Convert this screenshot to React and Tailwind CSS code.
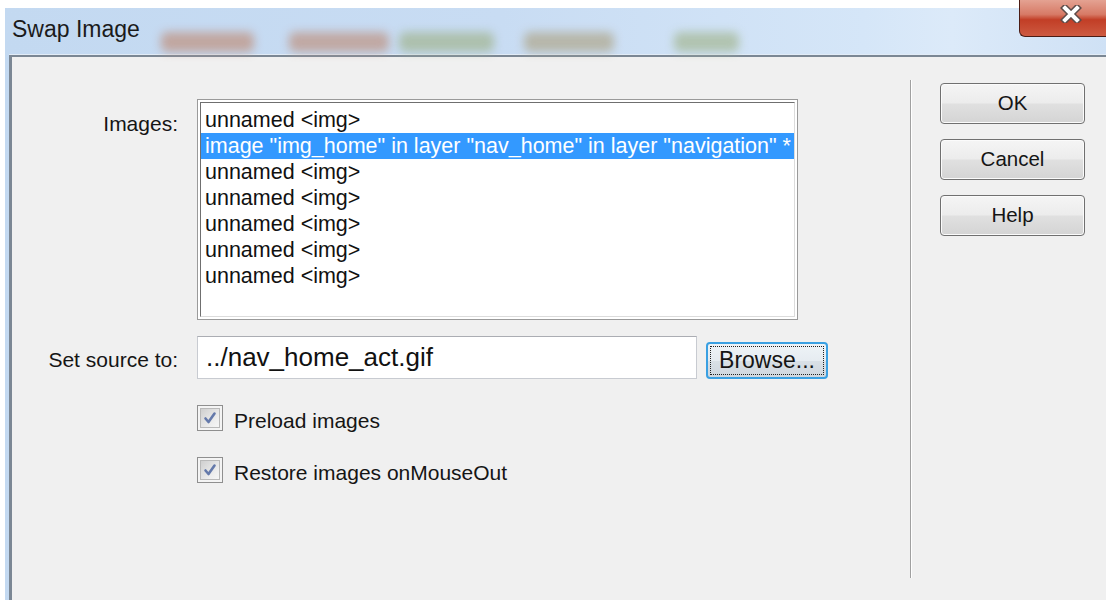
import React from "react";

const images = [
  "unnamed <img>",
  'image "img_home" in layer "nav_home" in layer "navigation" *',
  "unnamed <img>",
  "unnamed <img>",
  "unnamed <img>",
  "unnamed <img>",
  "unnamed <img>",
];

// blurred shapes of the window behind the glass title bar
const ghosts = [
  { w: "w-[93px]", ml: "ml-[21px]", c: "bg-[#c09a8c]" },
  { w: "w-[100px]", ml: "ml-[35px]", c: "bg-[#bf9c90]" },
  { w: "w-[95px]", ml: "ml-[10px]", c: "bg-[#a6b99c]" },
  { w: "w-[90px]", ml: "ml-[30px]", c: "bg-[#b2ad98]" },
  { w: "w-[65px]", ml: "ml-[60px]", c: "bg-[#a9bc9f]" },
];

function CheckBox({ label }) {
  return (
    <div className="flex items-center h-[26px]">
      <span className="w-[26px] h-[26px] border border-[#8f8f8f] bg-[#f4f4f4] p-[2px] flex">
        <span className="flex-1 flex items-center justify-center border border-[#b9b9b9] bg-[linear-gradient(135deg,#cfcfcf,#eeeeee_70%,#f6f6f6)]">
          <svg width="14" height="14" viewBox="0 0 14 14">
            <path
              d="M2.5 7.5 L5.5 11 L11.5 2.5"
              fill="none"
              stroke="#4d66a0"
              strokeWidth="2.6"
              strokeLinecap="round"
              strokeLinejoin="round"
              opacity="0.85"
            />
          </svg>
        </span>
      </span>
      <span className="ml-[11px] pt-[6px] text-[21px] text-[#151515]">{label}</span>
    </div>
  );
}

function DialogButton({ children }) {
  return (
    <button className="w-[145px] h-[41px] rounded-[4px] border border-[#707070] shadow-[inset_0_0_0_1px_#fbfbfb] bg-[linear-gradient(#f5f5f5_0%,#ececec_48%,#e0e0e0_52%,#d4d4d4_100%)] text-[20.5px] text-[#151515]">
      {children}
    </button>
  );
}

export default function App() {
  return (
    <div className="w-[1106px] h-[600px] bg-white overflow-hidden font-['Liberation_Sans',Arial,sans-serif]">
      <div className="relative ml-[5px] mt-[8px] h-[592px] flex flex-col pl-[4px] bg-[linear-gradient(90deg,#c3d9f1_0%,#c8dcf3_45%,#d5e6f8_78%,#dceaf9_86%,#cfe1f5_100%)]">
        {/* title bar */}
        <div className="h-[47px] flex items-center pl-[3px] border-b border-[#e2ecf7]">
          <span className="text-[23px] text-[#1b1b1b] pb-[4px]">Swap Image</span>
          <div className="flex self-end mb-[2px]">
            {ghosts.map((g, i) => (
              <span
                key={i}
                className={`${g.w} ${g.ml} ${g.c} h-[20px] rounded-[6px] blur-[5px] opacity-80`}
              />
            ))}
          </div>
        </div>

        {/* close button */}
        <div className="absolute -top-[8px] right-0 w-[87px] h-[37px] rounded-bl-[6px] border-l border-b border-[#4b1c15] bg-[linear-gradient(#e4a292_0%,#d77a66_40%,#c23e26_55%,#cd5a41_100%)] flex items-center justify-center pl-[15px] pb-[9px]">
          <svg width="24" height="18" viewBox="0 0 24 18">
            <path d="M6 3 L18 15 M18 3 L6 15" stroke="#5d4b48" strokeWidth="7" strokeLinecap="square" />
            <path d="M6 3 L18 15 M18 3 L6 15" stroke="#ffffff" strokeWidth="4" strokeLinecap="square" />
          </svg>
        </div>

        {/* client area */}
        <div className="flex-1 flex bg-[#f0f0f0] border-t-2 border-l-[3px] border-[#7b8794]">
          <div className="w-[898px] flex flex-col pt-[42px]">
            <div className="flex">
              <div className="w-[166px] text-right text-[21px] text-[#151515] pt-[9px]">Images:</div>
              <div className="ml-[19px] w-[601px] h-[221px] border border-[#9a9a9a] bg-white p-[2px] flex">
                <div className="flex-1 overflow-hidden border border-t-[#6f6f6f] border-l-[#6f6f6f] border-r-[#dcdcdc] border-b-[#dcdcdc] pt-[4px] text-[21.5px]">
                  {images.map((item, i) => (
                    <div
                      key={i}
                      className={
                        i === 1
                          ? "h-[26px] leading-[26px] pl-[4px] whitespace-nowrap bg-[#3399ff] text-white"
                          : "h-[26px] leading-[26px] pl-[4px] whitespace-nowrap text-[#111111]"
                      }
                    >
                      {item}
                    </div>
                  ))}
                </div>
              </div>
            </div>

            <div className="flex items-end mt-[16px]">
              <div className="w-[166px] text-right text-[21px] text-[#151515] self-center pt-[4px]">Set source to:</div>
              <div className="ml-[19px] w-[500px] h-[43px] bg-white border border-[#c8cbd1] border-t-[#abadb3] flex items-center pl-[8px] text-[26px] text-[#111111]">
                ../nav_home_act.gif
              </div>
              <button className="ml-[9px] w-[122px] h-[37px] rounded-[4px] border-2 border-[#3aa0e2] p-[2px] bg-[linear-gradient(#eef3f7_0%,#e6ecf1_50%,#d9e0e6_52%,#cfd7de_100%)] flex">
                <span className="flex-1 border border-dotted border-[#222222] flex items-center justify-center text-[23px] text-[#151515]">
                  Browse...
                </span>
              </button>
            </div>

            <div className="flex flex-col gap-[26px] mt-[26px] ml-[185px]">
              <CheckBox label="Preload images" />
              <CheckBox label="Restore images onMouseOut" />
            </div>
          </div>

          <div className="mt-[23px] mb-[22px] w-[2px] border-l border-[#a0a0a0] bg-white" />

          <div className="flex flex-col gap-[15px] pl-[28px] pt-[26px]">
            <DialogButton>OK</DialogButton>
            <DialogButton>Cancel</DialogButton>
            <DialogButton>Help</DialogButton>
          </div>
        </div>
      </div>
    </div>
  );
}
